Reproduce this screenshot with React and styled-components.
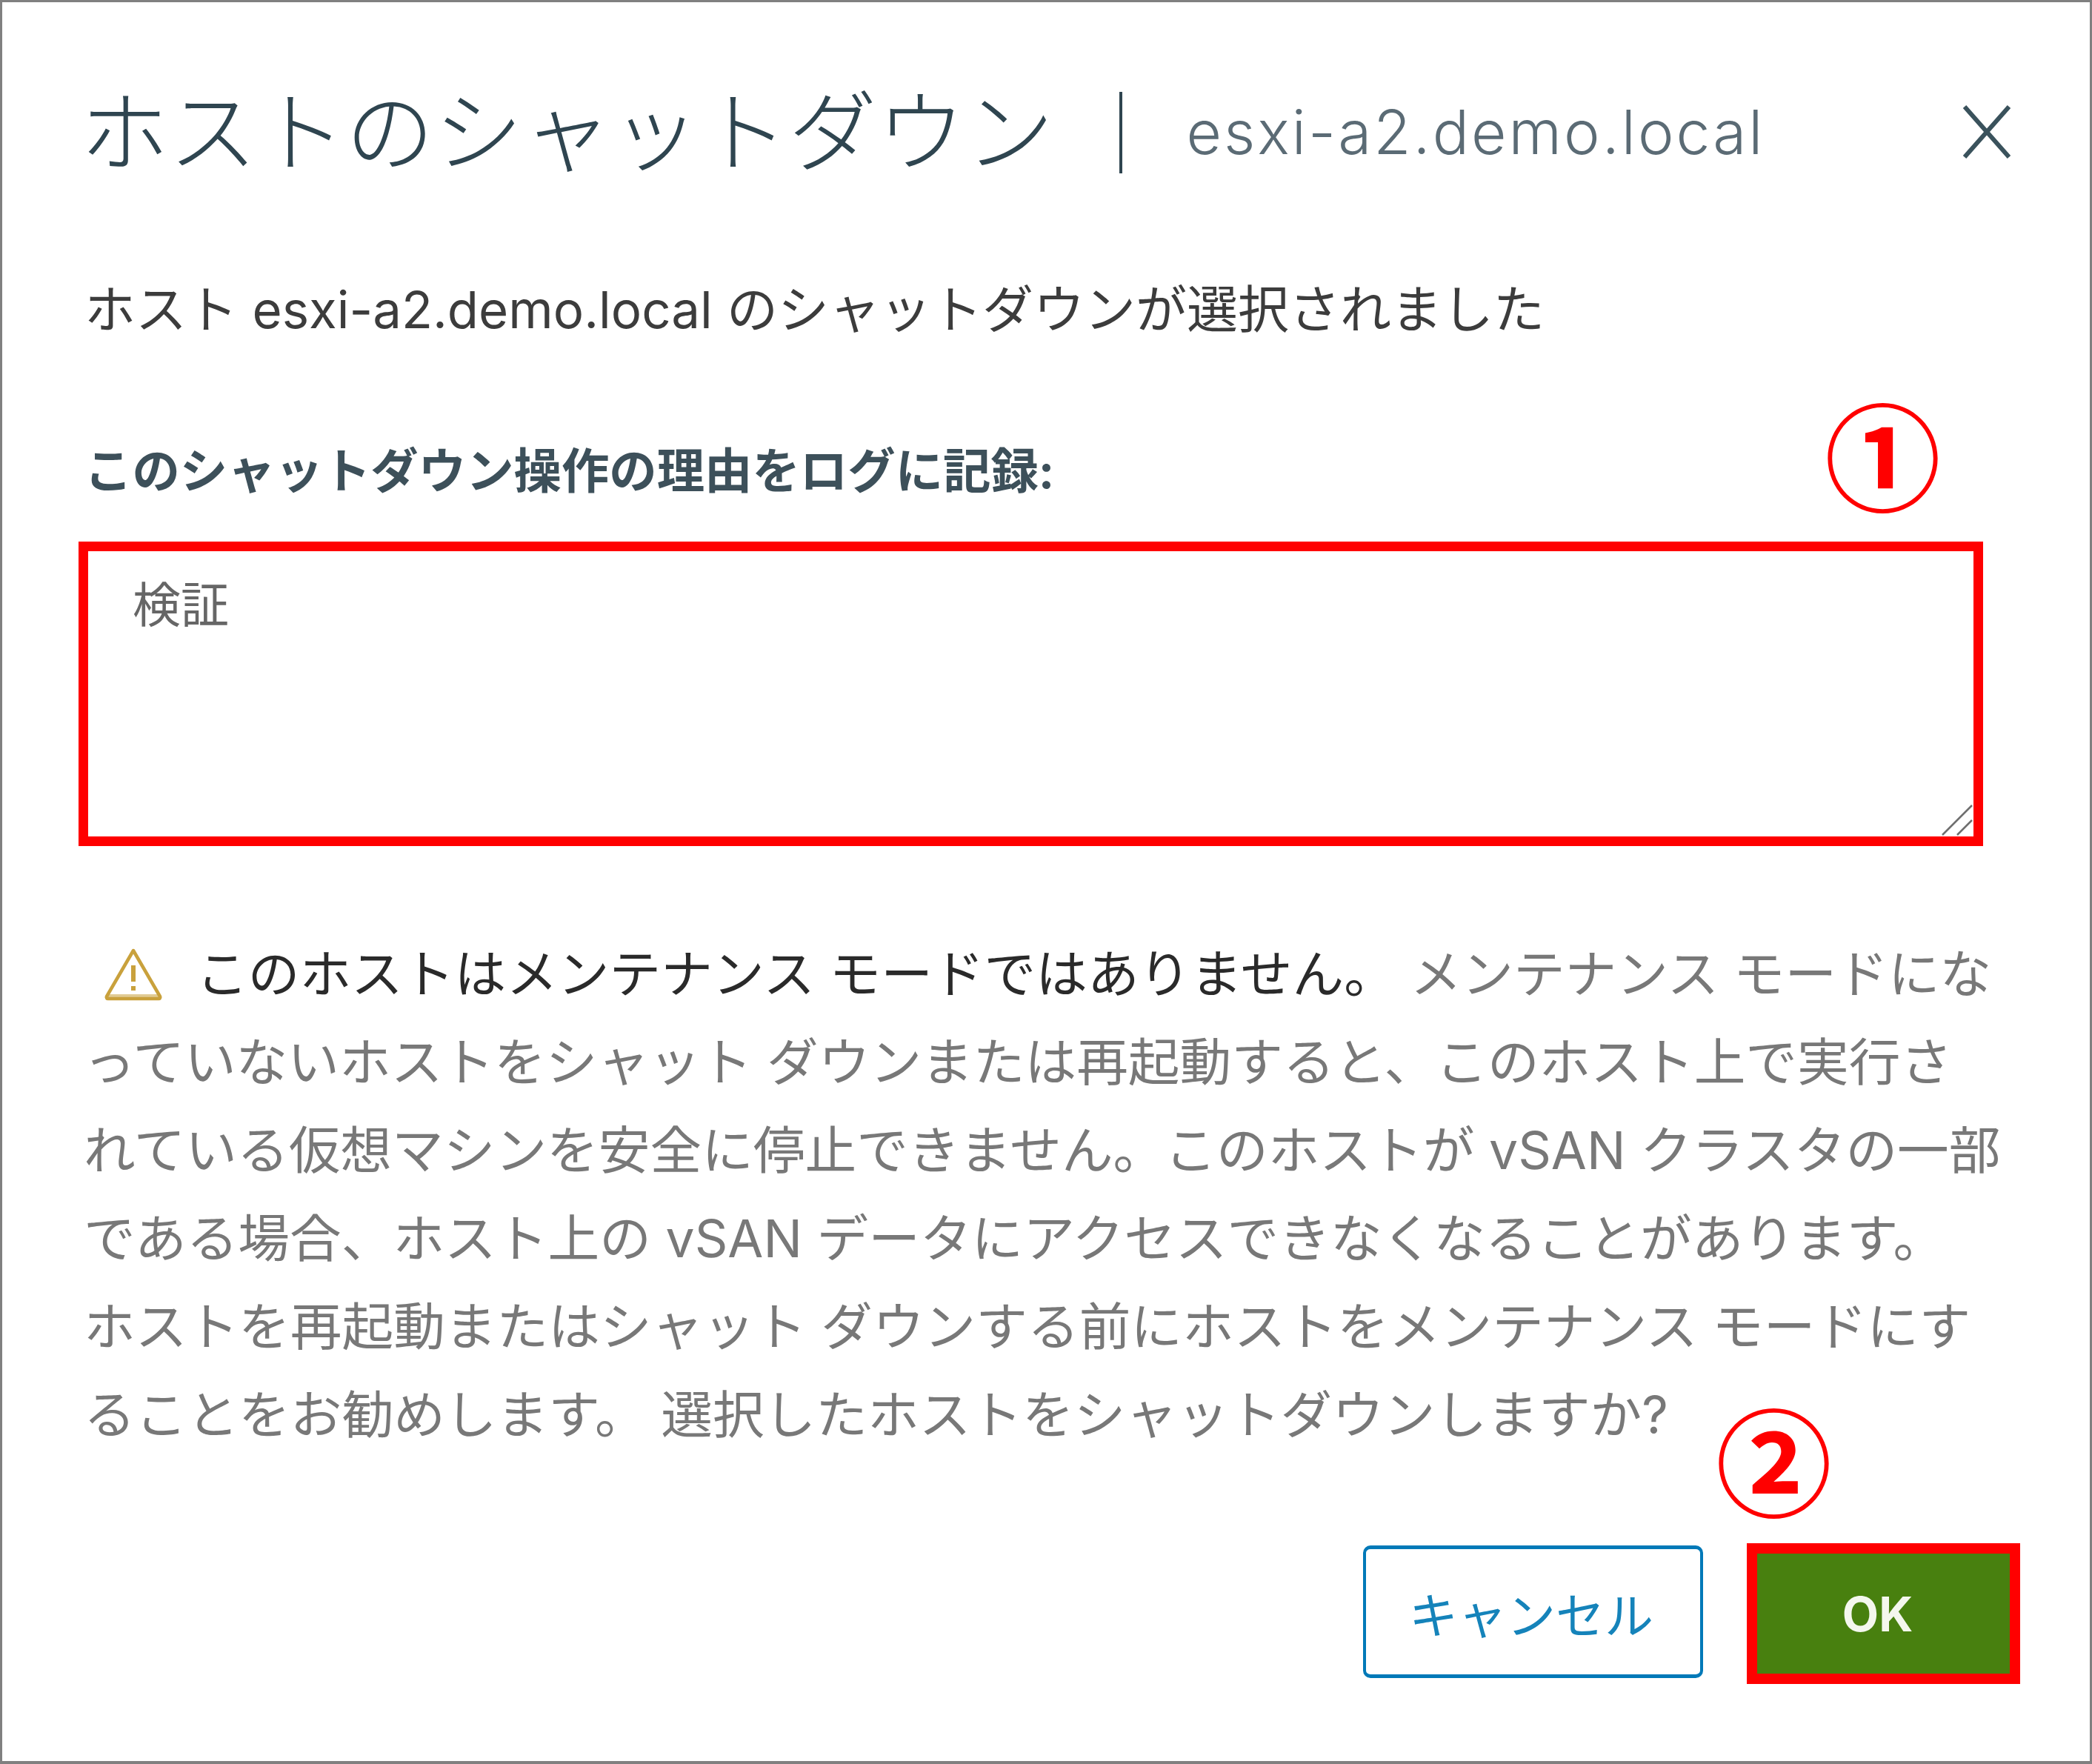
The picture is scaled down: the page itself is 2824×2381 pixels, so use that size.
import React from 'react';
import styled, { createGlobalStyle } from 'styled-components';

const fontStack = `Inter, "Noto Sans CJK JP", sans-serif`;

const GlobalStyle = createGlobalStyle`
  html, body {
    margin: 0;
    background: #fff;
  }
  * {
    box-sizing: border-box;
  }
`;

const Frame = styled.div`
  width: 2824px;
  height: 2381px;
  border: 3px solid #808080;
  border-bottom-width: 4px;
  background: #fff;
  font-family: ${fontStack};
  padding: 97px 0 0 103px;
`;

const Header = styled.div`
  display: flex;
  align-items: center;
  height: 156px;
  padding-left: 9px;
`;

const Title = styled.h1`
  margin: -18px 0 0 -7px;
  font-size: 119.5px;
  font-weight: 300;
  color: #2f4550;
  white-space: nowrap;
`;

const Divider = styled.span`
  width: 4px;
  height: 110px;
  margin: 2px 87px 0 88px;
  background: #2f4550;
`;

const Host = styled.span`
  font-size: 82px;
  font-weight: 300;
  letter-spacing: 3px;
  color: #5b6b75;
  white-space: nowrap;
`;

const CloseButton = styled.button`
  display: flex;
  margin-left: auto;
  margin-right: 107px;
  padding: 0;
  border: 0;
  background: none;
  color: #3a525c;
`;

const Intro = styled.p`
  margin: 122px 0 0;
  padding-left: 8px;
  font-size: 69px;
  line-height: 80px;
  color: #3c3c3c;
  white-space: nowrap;
`;

const Label = styled.label`
  display: block;
  margin-top: 138px;
  padding-left: 8px;
  font-size: 64.4px;
  line-height: 80px;
  font-weight: 700;
  color: #3d505a;
  white-space: nowrap;
`;

const Field = styled.div`
  position: relative;
  width: 2571px;
  height: 411px;
  margin-top: 55px;
  padding: 33px 60px;
  border: 13px solid #ff0000;
  font-size: 65px;
  line-height: 80px;
  color: #666;
`;

const ResizeHandle = styled.svg`
  position: absolute;
  right: 0;
  bottom: 0;
  color: #6f6f6f;
`;

const Marker = styled.span`
  position: absolute;
  right: ${props => props.$right}px;
  bottom: ${props => props.$bottom}px;
  font-family: "Noto Sans CJK JP", sans-serif;
  font-size: 157px;
  line-height: 160px;
  font-weight: 700;
  color: #ff0000;
`;

const Warning = styled.div`
  margin-top: 113px;
  padding-left: 7px;
  font-size: 69.7px;
  line-height: 119px;
  color: #787878;
`;

const WarningLine = styled.div`
  display: flex;
  align-items: center;
  white-space: pre;
  height: 119px;
`;

const WarningIcon = styled.svg`
  flex: none;
  margin: 0 45px 0 27px;
  color: #c9a13c;
`;

const Strong = styled.span`
  color: #2a2a2a;
`;

const Footer = styled.div`
  position: relative;
  display: flex;
  justify-content: flex-end;
  align-items: flex-start;
  gap: 59px;
  margin-top: 114px;
  padding-right: 94px;
`;

const CancelButton = styled.button`
  width: 459px;
  height: 179px;
  margin-top: 3px;
  padding: 0 5px 0 0;
  background: #fff;
  border: 4px solid #0079b8;
  border-top-width: 5px;
  border-bottom-width: 5px;
  border-radius: 10px;
  color: #1583ba;
  font-family: ${fontStack};
  font-size: 66px;
`;

const OkButton = styled.button`
  width: 369px;
  height: 190px;
  padding: 0 16px 0 0;
  background: #48800f;
  border: 14px solid #ff0000;
  color: #f4f7ee;
  font-family: ${fontStack};
  font-size: 64px;
  font-weight: 700;
`;

const warningLines = [
  'っていないホストをシャット ダウンまたは再起動すると、このホスト上で実行さ',
  'れている仮想マシンを安全に停止できません。このホストが vSAN クラスタの一部',
  'である場合、ホスト上の vSAN データにアクセスできなくなることがあります。',
  'ホストを再起動またはシャット ダウンする前にホストをメンテナンス モードにす',
  'ることをお勧めします。 選択したホストをシャットダウンしますか?',
];

const App = () => (
  <>
    <GlobalStyle />
    <Frame>
      <Header>
        <Title>ホストのシャットダウン</Title>
        <Divider />
        <Host>esxi-a2.demo.local</Host>
        <CloseButton aria-label="閉じる">
          <svg width="64" height="72" viewBox="0 0 64 72" fill="none">
            <path d="M2 2L62 70M62 2L2 70" stroke="currentColor" strokeWidth="6" />
          </svg>
        </CloseButton>
      </Header>
      <Intro>ホスト esxi-a2.demo.local のシャットダウンが選択されました</Intro>
      <Label>このシャットダウン操作の理由をログに記録:</Label>
      <Field>
        検証
        <ResizeHandle width="44" height="44" viewBox="0 0 44 44" fill="none">
          <path d="M2 42L42 2M22 42L42 22" stroke="currentColor" strokeWidth="2.5" />
        </ResizeHandle>
        <Marker $right={44} $bottom={439}>①</Marker>
      </Field>
      <Warning>
        <WarningLine>
          <WarningIcon width="80" height="72" viewBox="0 0 80 72" fill="none">
            <path d="M40 4L76 66a2 2 0 0 1-2 3H6a2 2 0 0 1-2-3Z" stroke="currentColor" strokeWidth="4.5" strokeLinejoin="round" />
            <path d="M40 24V46M40 52V58" stroke="currentColor" strokeWidth="6" />
            <path d="M6 66H74" stroke="currentColor" strokeWidth="6" opacity="0.55" />
          </WarningIcon>
          <Strong>このホストはメンテナンス モードではありません。</Strong>
          {' メンテナンス モードにな'}
        </WarningLine>
        {warningLines.map(line => (
          <WarningLine key={line}>{line}</WarningLine>
        ))}
      </Warning>
      <Footer>
        <Marker $right={348} $bottom={226}>②</Marker>
        <CancelButton>キャンセル</CancelButton>
        <OkButton>OK</OkButton>
      </Footer>
    </Frame>
  </>
);

export default App;
